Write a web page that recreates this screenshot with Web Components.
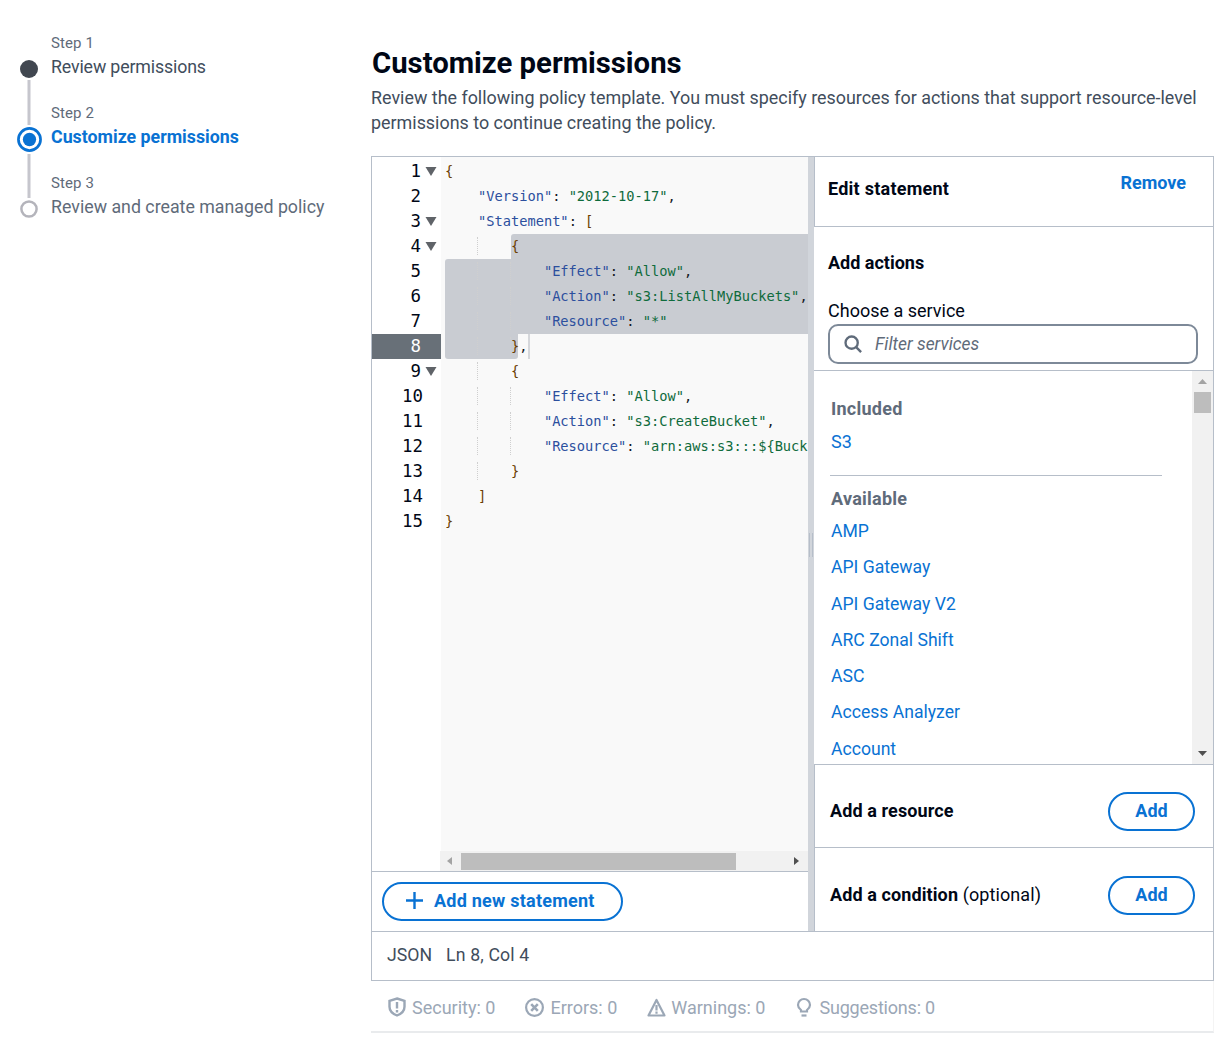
<!DOCTYPE html>
<html lang="en">
<head>
<meta charset="utf-8">
<title>Customize permissions</title>
<style>
    html, body { margin: 0; padding: 0; background: #fff; }
    body { font-family: Roboto, "Liberation Sans", sans-serif; color: #000716; }
</style>
</head>
<body>
<policy-page>
    <step-nav slot="nav">
        <nav-step label="Step 1" state="done">Review permissions</nav-step>
        <nav-step label="Step 2" state="active">Customize permissions</nav-step>
        <nav-step label="Step 3" state="todo">Review and create managed policy</nav-step>
    </step-nav>
    <page-head slot="head" title="Customize permissions">Review the following policy template. You must specify resources for actions that support resource-level permissions to continue creating the policy.</page-head>
    <policy-workspace slot="work">
        <code-editor slot="left"></code-editor>
        <statement-panel slot="right"></statement-panel>
    </policy-workspace>
</policy-page>

<script>
// --- Page frame ---
class PolicyPage extends HTMLElement {
    constructor() {
        super();
        this.attachShadow({ mode: 'open' });
        this.shadowRoot.innerHTML = `
            <style>
                :host { display: grid; grid-template-columns: 371px 843px; width: 1229px; }
                .main { display: flex; flex-direction: column; }
            </style>
            <div><slot name="nav"></slot></div>
            <div class="main"><slot name="head"></slot><slot name="work"></slot></div>
        `;
    }
}
customElements.define('policy-page', PolicyPage);

// --- Side navigation ---
class StepNav extends HTMLElement {
    constructor() {
        super();
        this.attachShadow({ mode: 'open' });
        this.shadowRoot.innerHTML = `
            <style>:host { display: flex; flex-direction: column; padding: 33px 0 0 16px; }</style>
            <slot></slot>
        `;
    }
}
customElements.define('step-nav', StepNav);

class NavStep extends HTMLElement {
    constructor() {
        super();
        this.attachShadow({ mode: 'open' });
    }

    connectedCallback() {
        const state = this.getAttribute('state');
        const label = this.getAttribute('label');
        const dots = {
            done: '<svg width="18" height="18" viewBox="0 0 18 18"><circle cx="9" cy="9" r="9" fill="#414750"/></svg>',
            active: '<svg width="25" height="25" viewBox="0 0 26 26"><circle cx="13" cy="13" r="11.5" fill="#fff" stroke="#0972d3" stroke-width="2.8"/><circle cx="13" cy="13" r="6.9" fill="#0972d3"/></svg>',
            todo: '<svg width="18" height="18" viewBox="0 0 18 18"><circle cx="9" cy="9" r="7.6" fill="#fff" stroke="#b4b4bb" stroke-width="2.5"/></svg>'
        };
        this.shadowRoot.innerHTML = `
            <style>
                :host { display: grid; grid-template-columns: 26px 1fr; column-gap: 9px; height: 70px; }
                .rail { display: flex; flex-direction: column; align-items: center; height: 70px; margin-top: 1px; }
                .rail i { flex: 1; width: 3px; background: #c6c6cd; transform: translateX(-0.5px); }
                .rail i.gap-top { margin-bottom: 2px; }
                .rail i.gap-bottom { margin-top: 2px; }
                .rail i.none { background: transparent; }
                .rail svg { flex: none; display: block; }
                .label { font-size: 15px; line-height: 20px; color: #5f6b7a; letter-spacing: 0.1px; }
                .title { font-size: 17.8px; line-height: 28px; color: #414d5c; white-space: nowrap; }
                :host([state=done]) .title { letter-spacing: -0.15px; }
                :host([state=active]) .title { color: #0972d3; font-weight: 700; }
                :host([state=todo]) .title { color: #5f6b7a; }
            </style>
            <div class="rail">
                <i class="gap-top ${state === 'done' ? 'none' : ''}"></i>
                ${dots[state]}
                <i class="gap-bottom ${state === 'todo' ? 'none' : ''}"></i>
            </div>
            <div>
                <div class="label">${label}</div>
                <div class="title"><slot></slot></div>
            </div>
        `;
    }
}
customElements.define('nav-step', NavStep);

// --- Heading ---
class PageHead extends HTMLElement {
    constructor() {
        super();
        this.attachShadow({ mode: 'open' });
    }

    connectedCallback() {
        this.shadowRoot.innerHTML = `
            <style>
                :host { display: block; height: 156px; padding-top: 44px; box-sizing: border-box; }
                h1 { margin: 0 0 3px 0; font-size: 29.3px; line-height: 38px; font-weight: 700; color: #000716; padding-left: 1px; }
                p { margin: 0; font-size: 17.9px; line-height: 25px; color: #414d5c; }
            </style>
            <h1>${this.getAttribute('title')}</h1>
            <p><slot></slot></p>
        `;
    }
}
customElements.define('page-head', PageHead);

// --- Workspace box ---
class PolicyWorkspace extends HTMLElement {
    constructor() {
        super();
        this.attachShadow({ mode: 'open' });
        this.shadowRoot.innerHTML = `
            <style>
                :host { display: block; width: 843px; }
                .box { border: 1px solid #b6bec9; height: 825px; box-sizing: border-box; display: flex; flex-direction: column; }
                .panes { display: flex; height: 774px; border-bottom: 1px solid #b6bec9; flex: none; }
                .split { width: 6px; flex: none; background: #d1d5db; position: relative; }
                .split::after { content: ''; position: absolute; left: 1px; top: 376px; width: 2px; height: 24px; border-left: 1px solid #b6bec9; border-right: 1px solid #b6bec9; }
                .status { display: flex; gap: 14px; padding: 0 0 3px 15px; height: 48px; box-sizing: border-box; flex: none; align-items: center; font-size: 17.7px; color: #414d5c; }
                .status span + span { letter-spacing: 0.15px; }
                .foot { display: flex; height: 52px; box-sizing: border-box; align-items: center; padding: 2px 0 0 17px; font-size: 18px; color: #9ba7b6; border-bottom: 2px solid #e9ebed; border-right: 1px solid #f4f4f4; }
                .foot span { display: inline-flex; align-items: center; gap: 6px; margin-right: 30px; }
                .foot svg { display: block; flex: none; }
                .foot .warn { gap: 5px; margin-right: 31px; }
                .foot .tip { gap: 7px; margin-right: 0; letter-spacing: -0.2px; }
            </style>
            <div class="box">
                <div class="panes">
                    <slot name="left"></slot>
                    <div class="split"></div>
                    <slot name="right"></slot>
                </div>
                <div class="status"><span>JSON</span><span>Ln 8, Col 4</span></div>
            </div>
            <div class="foot">
                <span><svg width="18" height="20" viewBox="0 0 18 20" fill="none" stroke="#9ba7b6" stroke-width="2.400"><path d="M9 1.500l7.500 2.300v6c0 4.300-3 7-7.500 8.700-4.500-1.700-7.500-4.400-7.500-8.700v-6z"/><path d="M9 5v6.500M9 13v2.500"/></svg>Security: 0</span>
                <span><svg width="19" height="19" viewBox="0 0 19 19" fill="none" stroke="#9ba7b6" stroke-width="2.200"><circle cx="9.500" cy="9.500" r="8.400"/><path d="M6.200 6.200l6.600 6.600M12.800 6.200l-6.600 6.600" stroke-width="2.600"/></svg>Errors: 0</span>
                <span class="warn"><svg width="19" height="19" viewBox="0 0 19 19" fill="none" stroke="#9ba7b6" stroke-width="2.200"><path d="M9.500 2L1.500 17.500h16z" stroke-linejoin="round"/><path d="M9.500 7v5.500M9.500 13.500v2.200"/></svg>Warnings: 0</span>
                <span class="tip"><svg width="16" height="20" viewBox="0 0 16 20" fill="none" stroke="#9ba7b6" stroke-width="2.200"><path d="M5 13c-1.700-1.300-3-2.900-3-5a6 6 0 0 1 12 0c0 2.100-1.300 3.700-3 5v1.500H5z"/><path d="M5.500 18.500h5"/></svg>Suggestions: 0</span>
            </div>
        `;
    }
}
customElements.define('policy-workspace', PolicyWorkspace);

// --- Code editor ---
const POLICY_LINES = [
    { fold: true, code: '<b>{</b>' },
    { code: '    <k>"Version"</k>: <s>"2012-10-17"</s>,' },
    { fold: true, code: '    <k>"Statement"</k>: <b>[</b>' },
    { fold: true, guides: 1, code: '        <b>{</b>', sel: 'first' },
    { guides: 2, code: '            <k>"Effect"</k>: <s>"Allow"</s>,', sel: 'mid start' },
    { guides: 2, code: '            <k>"Action"</k>: <s>"s3:ListAllMyBuckets"</s>,', sel: 'mid' },
    { guides: 2, code: '            <k>"Resource"</k>: <s>"*"</s>', sel: 'mid' },
    { guides: 2, code: '        <b>}</b>,', sel: 'last', current: true },
    { fold: true, guides: 1, code: '        <b>{</b>' },
    { guides: 2, code: '            <k>"Effect"</k>: <s>"Allow"</s>,' },
    { guides: 2, code: '            <k>"Action"</k>: <s>"s3:CreateBucket"</s>,' },
    { guides: 2, code: '            <k>"Resource"</k>: <s>"arn:aws:s3:::\${Buck</s>' },
    { guides: 1, code: '        <b>}</b>' },
    { code: '    <b>]</b>' },
    { code: '<b>}</b>' }
];

class CodeEditor extends HTMLElement {
    constructor() {
        super();
        this.attachShadow({ mode: 'open' });
    }

    connectedCallback() {
        const rows = POLICY_LINES.map((line, i) => {
            const guides = [0, 1].slice(0, line.guides || 0).map(g => `<u style="left:${36 + g * 33}px"></u>`).join('');
            const narrow = i < 9 ? 'one' : '';
            return `
                <div class="num ${narrow} ${line.current ? 'cur' : ''}">${i + 1}${line.fold ? '<svg width="12" height="9" viewBox="0 0 12 9"><path d="M0.500 0h11L6 9z" fill="#5f6368"/></svg>' : ''}</div>
                <div class="line">${line.sel ? `<em class="${line.sel}"></em>` : ''}${guides}<pre>${line.code}</pre>${line.current ? '<i class="caret"></i>' : ''}</div>
            `;
        }).join('');
        this.shadowRoot.innerHTML = `
            <style>
                :host { display: flex; flex-direction: column; width: 436px; flex: none; }
                .top { height: 714px; background: #fff; display: flex; flex-direction: column; }
                .rows { flex: 1; display: grid; grid-template-columns: 69px 367px; grid-auto-rows: 25px; align-content: start; padding-top: 2px; background: linear-gradient(90deg, #fff 69px, #f9f9f9 69px); overflow: hidden; }
                .num { position: relative; font: 17.4px/25px "DejaVu Sans Mono", monospace; color: #000716; padding-right: 18px; text-align: right; }
                .num.one { padding-right: 20px; }
                .num svg { position: absolute; right: 4px; top: 8px; }
                .num.cur { background: #687078; color: #fff; }
                .line { position: relative; height: 25px; padding-left: 4px; overflow: hidden; }
                pre { position: relative; margin: 0; font: 13.7px/25px "DejaVu Sans Mono", monospace; color: #16191f; white-space: pre; }
                k { color: #2c4f9e; }
                s { color: #0f6b3c; text-decoration: none; }
                b { color: #6b3d00; font-weight: 400; }
                em { position: absolute; top: 0; bottom: 0; background: #c9ccd2; }
                em.first { left: 70px; right: 0; border-top-left-radius: 3px; }
                em.mid { left: 4px; right: 0; }
                em.start { border-top-left-radius: 3px; }
                em.last { left: 4px; width: 73px; border-radius: 0 0 3px 3px; }
                u { position: absolute; top: 3px; height: 18px; border-left: 1px dotted #cfcfcf; }
                .caret { position: absolute; left: 87px; top: 0; bottom: 0; width: 2px; background: #d5d7db; }
                .hbar { height: 20px; flex: none; display: flex; align-items: center; margin-left: 68px; background: #f1f1f1; }
                .hbar svg { flex: none; }
                .thumb { height: 17px; width: 275px; background: #bdbdbd; }
                .hbar .spacer { flex: 1; }
                .actions { height: 60px; box-sizing: border-box; border-top: 1px solid #b6bec9; padding: 10px 0 0 10px; }
                button { display: inline-flex; align-items: center; height: 39px; width: 241px; box-sizing: border-box; border: 2px solid #0972d3; border-radius: 20px; background: #fff; color: #0972d3; font: 700 18px Roboto, "Liberation Sans", sans-serif; letter-spacing: 0.24px; padding: 0 0 2px 21px; gap: 10px; }
                button svg { display: block; }
            </style>
            <div class="top">
                <div class="rows">${rows}</div>
                <div class="hbar">
                    <svg width="21" height="20" viewBox="0 0 21 20"><path d="M12 6v8L7 10z" fill="#a3a3a3"/></svg>
                    <div class="thumb"></div>
                    <div class="spacer"></div>
                    <svg width="21" height="20" viewBox="0 0 21 20"><path d="M7 6v8l5-4z" fill="#505050"/></svg>
                </div>
            </div>
            <div class="actions">
                <button><svg width="19" height="19" viewBox="0 0 19 19"><path d="M9.500 1v17M1 9.500h17" stroke="#0972d3" stroke-width="2.400" fill="none"/></svg>Add new statement</button>
            </div>
        `;
    }
}
customElements.define('code-editor', CodeEditor);

// --- Right panel ---
class StatementPanel extends HTMLElement {
    constructor() {
        super();
        this.attachShadow({ mode: 'open' });
        this.shadowRoot.innerHTML = `
            <style>
                :host { display: flex; flex-direction: column; width: 399px; flex: none; font-size: 18px; }
                .head { height: 70px; box-sizing: border-box; border-bottom: 1px solid #b6bec9; border-left: 1px solid #b6bec9; display: flex; justify-content: space-between; padding: 0 27px 0 13px; }
                .head strong { margin-top: 21px; line-height: 22px; letter-spacing: 0.25px; }
                .head a { margin-top: 15px; line-height: 22px; font-weight: 700; color: #0972d3; }
                .choose { height: 144px; box-sizing: border-box; border-bottom: 1px solid #b6bec9; padding: 25px 0 0 14px; }
                .choose strong { display: block; line-height: 22px; }
                .choose label { display: block; margin-top: 26px; line-height: 22px; color: #000716; }
                .filter { display: flex; align-items: center; gap: 13px; width: 370px; height: 40px; margin-top: 2px; box-sizing: border-box; border: 2px solid #7d8998; border-radius: 10px; padding: 0 0 1px 14px; color: #5f6b7a; font-style: italic; font-size: 17.4px; }
                .filter svg { display: block; flex: none; }
                .list { height: 394px; display: flex; border-bottom: 1px solid #b6bec9; box-sizing: border-box; }
                .items { flex: 1; overflow: hidden; padding: 0 0 0 17px; }
                h4 { margin: 27px 0 0; font-size: 18px; line-height: 22px; font-weight: 700; color: #5f6b7a; letter-spacing: 0.25px; }
                .s3 { margin-top: 11px; line-height: 22px; color: #0972d3; }
                hr { border: 0; border-top: 1px solid #b6bec9; width: 332px; margin: 22px 0 0 -1px; }
                hr + h4 { margin-top: 12px; }
                ul { list-style: none; margin: 3px 0 0; padding: 0; font-size: 17.6px; }
                li { height: 36.250px; line-height: 36.250px; color: #0972d3; white-space: nowrap; }
                .vbar { width: 21px; flex: none; background: #f1f1f1; display: flex; flex-direction: column; }
                .vbar svg { display: block; flex: none; }
                .vbar i { display: block; height: 21px; width: 17px; margin-left: 2px; background: #bdbdbd; }
                .vbar .spacer { flex: 1; }
                .row { display: flex; align-items: center; justify-content: space-between; padding: 10px 18px 0 16px; box-sizing: border-box; height: 83px; border-bottom: 1px solid #b6bec9; border-left: 1px solid #b6bec9; }
                .row:last-child { border-bottom: 0; padding-top: 11px; }
                .row strong { margin: 0 0 2px -1px; letter-spacing: 0.1px; }
                .row span { font-weight: 400; }
                .row button { width: 87px; height: 39px; border: 2px solid #0972d3; border-radius: 20px; background: #fff; color: #0972d3; font: 700 18px Roboto, "Liberation Sans", sans-serif; padding: 0 0 2px; }
            </style>
            <div class="head"><strong>Edit statement</strong><a>Remove</a></div>
            <div class="choose">
                <strong>Add actions</strong>
                <label>Choose a service</label>
                <div class="filter"><svg width="18" height="18" viewBox="0 0 20 20" fill="none" stroke="#5f6b7a" stroke-width="2.600"><circle cx="8.500" cy="8.500" r="6.800"/><path d="M13.500 13.500l5.500 5.500"/></svg>Filter services</div>
            </div>
            <div class="list">
                <div class="items">
                    <h4>Included</h4>
                    <div class="s3">S3</div>
                    <hr>
                    <h4>Available</h4>
                    <ul>
                        <li>AMP</li><li>API Gateway</li><li>API Gateway V2</li><li>ARC Zonal Shift</li><li>ASC</li><li>Access Analyzer</li><li>Account</li>
                    </ul>
                </div>
                <div class="vbar">
                    <svg width="21" height="21" viewBox="0 0 21 21"><path d="M6 13h9l-4.500-5z" fill="#a3a3a3"/></svg>
                    <i></i>
                    <div class="spacer"></div>
                    <svg width="21" height="21" viewBox="0 0 21 21"><path d="M6 8h9l-4.500 5z" fill="#505050"/></svg>
                </div>
            </div>
            <div class="row"><strong>Add a resource</strong><button>Add</button></div>
            <div class="row"><strong>Add a condition <span>(optional)</span></strong><button>Add</button></div>
        `;
    }
}
customElements.define('statement-panel', StatementPanel);
</script>
</body>
</html>
